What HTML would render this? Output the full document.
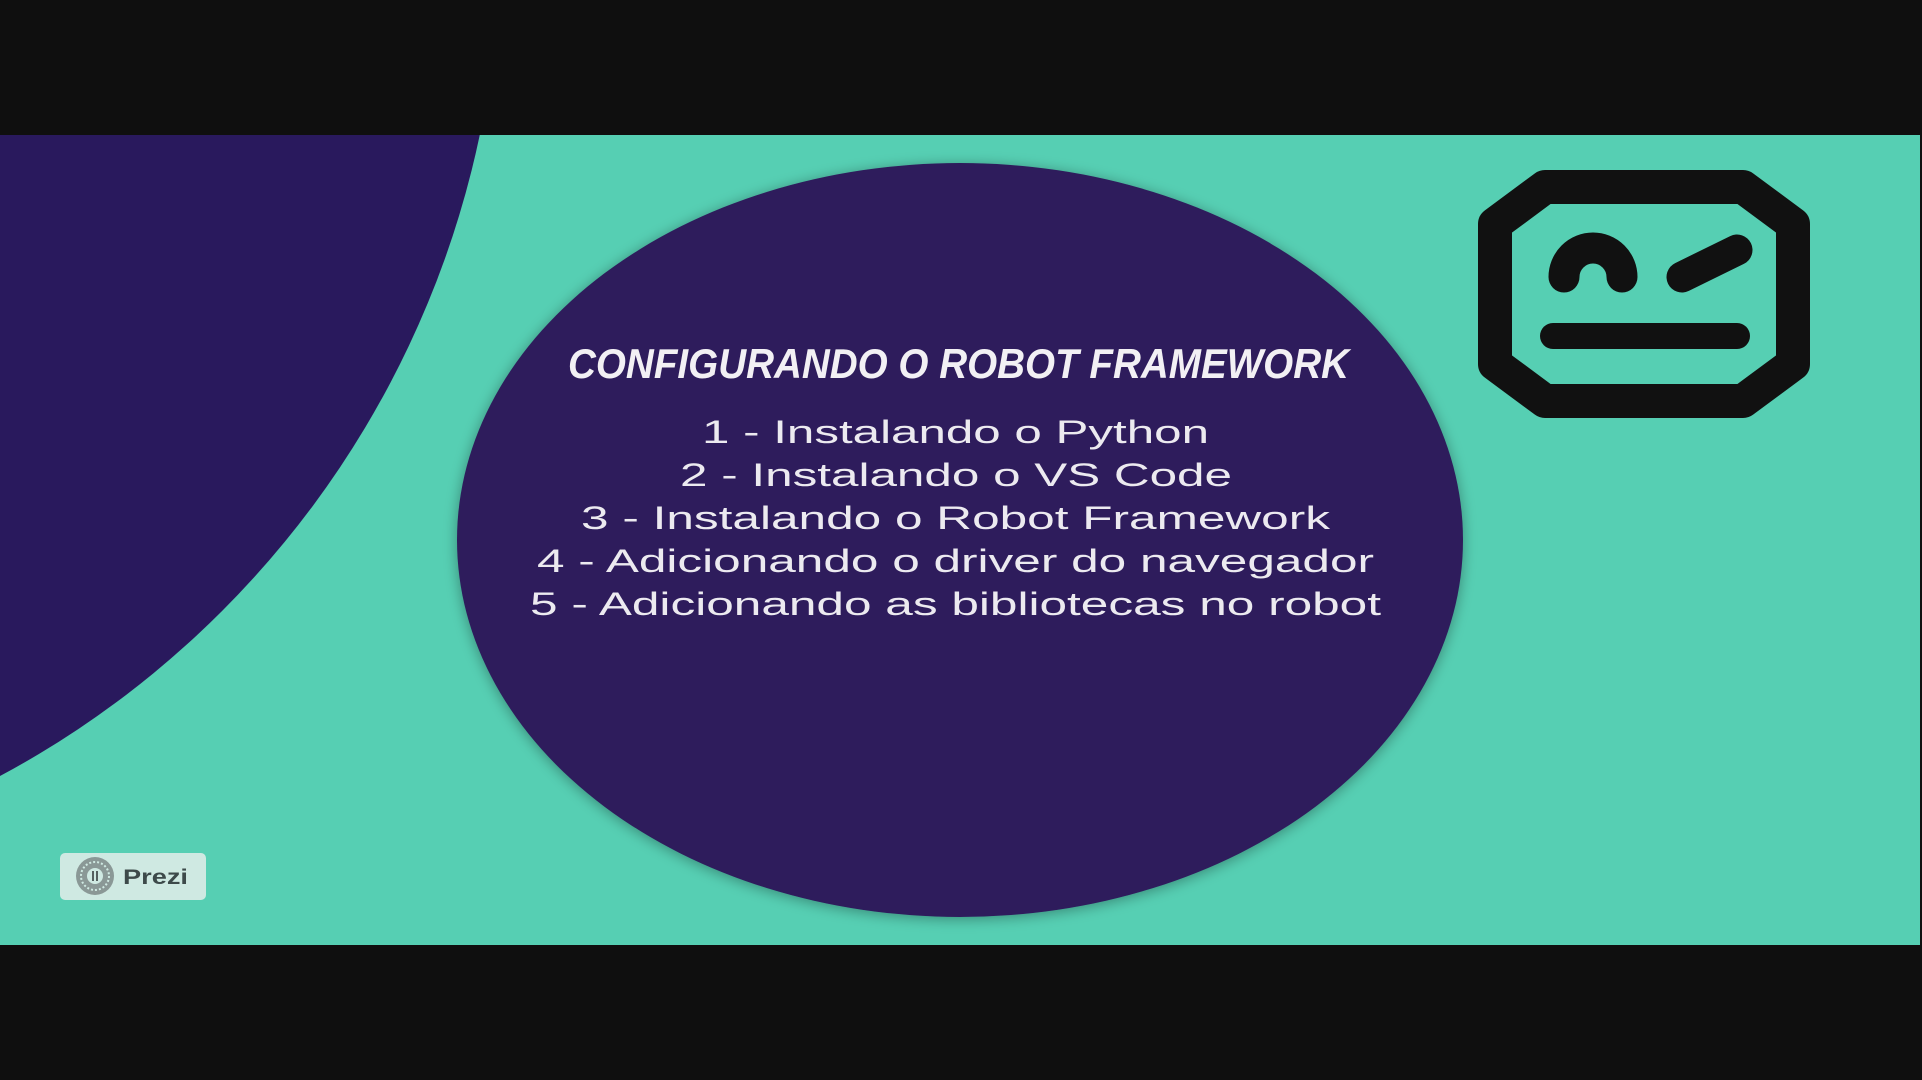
<!DOCTYPE html>
<html><head><meta charset="utf-8"><style>
html,body{margin:0;padding:0;background:#0f0f0f;width:1922px;height:1080px;overflow:hidden}
svg{display:block}
</style></head><body>
<svg width="1922" height="1080" viewBox="0 0 1922 1080" xmlns="http://www.w3.org/2000/svg">
<defs>
<filter id="sh" x="-10%" y="-10%" width="120%" height="120%">
<feGaussianBlur in="SourceAlpha" stdDeviation="7"/>
<feOffset dx="0" dy="2"/>
<feComponentTransfer><feFuncA type="linear" slope="0.35"/></feComponentTransfer>
<feMerge><feMergeNode/><feMergeNode in="SourceGraphic"/></feMerge>
</filter>
<clipPath id="slide"><rect x="0" y="135" width="1920" height="810"/></clipPath>
</defs>
<rect x="0" y="0" width="1922" height="1080" fill="#0f0f0f"/>
<g clip-path="url(#slide)">
<rect x="0" y="135" width="1920" height="810" fill="#56cfb3"/>
<circle cx="-449" cy="-60" r="949" fill="#29195d"/>
<ellipse cx="960" cy="540" rx="503" ry="377" fill="#2e1f5b" filter="url(#sh)"/>
<g fill="none" stroke="#111" stroke-linecap="round" stroke-linejoin="round">
<path d="M1545 187 L1743 187 L1793 224 L1793 364 L1743 401 L1545 401 L1495 364 L1495 224 Z" stroke-width="34"/>
<path d="M1564 277 A29 29 0 0 1 1622 277" stroke-width="31"/>
<path d="M1682 277 L1737 250" stroke-width="31"/>
<path d="M1553 336 L1737 336" stroke-width="26"/>
</g>
<text x="568" y="378" textLength="781" lengthAdjust="spacingAndGlyphs" font-family="Liberation Sans, sans-serif" font-weight="bold" font-style="italic" font-size="42" fill="#f2f0f4">CONFIGURANDO O ROBOT FRAMEWORK</text>
<g font-family="Liberation Sans, sans-serif" font-size="32" fill="#eceaf0">
<text x="702" y="443" textLength="507" lengthAdjust="spacingAndGlyphs">1 - Instalando o Python</text>
<text x="680" y="486" textLength="552" lengthAdjust="spacingAndGlyphs">2 - Instalando o VS Code</text>
<text x="581" y="529" textLength="749" lengthAdjust="spacingAndGlyphs">3 - Instalando o Robot Framework</text>
<text x="537" y="572" textLength="837" lengthAdjust="spacingAndGlyphs">4 - Adicionando o driver do navegador</text>
<text x="530" y="615" textLength="851" lengthAdjust="spacingAndGlyphs">5 - Adicionando as bibliotecas no robot</text>
</g>
<rect x="60" y="853" width="146" height="47" rx="5" fill="#cfe9e2"/>
<circle cx="95" cy="876" r="19" fill="#8a9896"/>
<circle cx="95" cy="876" r="14" fill="none" stroke="#cfe9e2" stroke-width="2" stroke-dasharray="2 2"/>
<circle cx="95" cy="876" r="8" fill="#cfe9e2"/>
<rect x="92" y="871" width="2" height="10" fill="#55605f"/>
<rect x="96" y="871" width="2" height="10" fill="#55605f"/>
<text x="123" y="884" font-family="Liberation Sans, sans-serif" font-weight="bold" font-size="21" fill="#3d4a4a" textLength="65" lengthAdjust="spacingAndGlyphs">Prezi</text>
</g>
</svg>
</body></html>
